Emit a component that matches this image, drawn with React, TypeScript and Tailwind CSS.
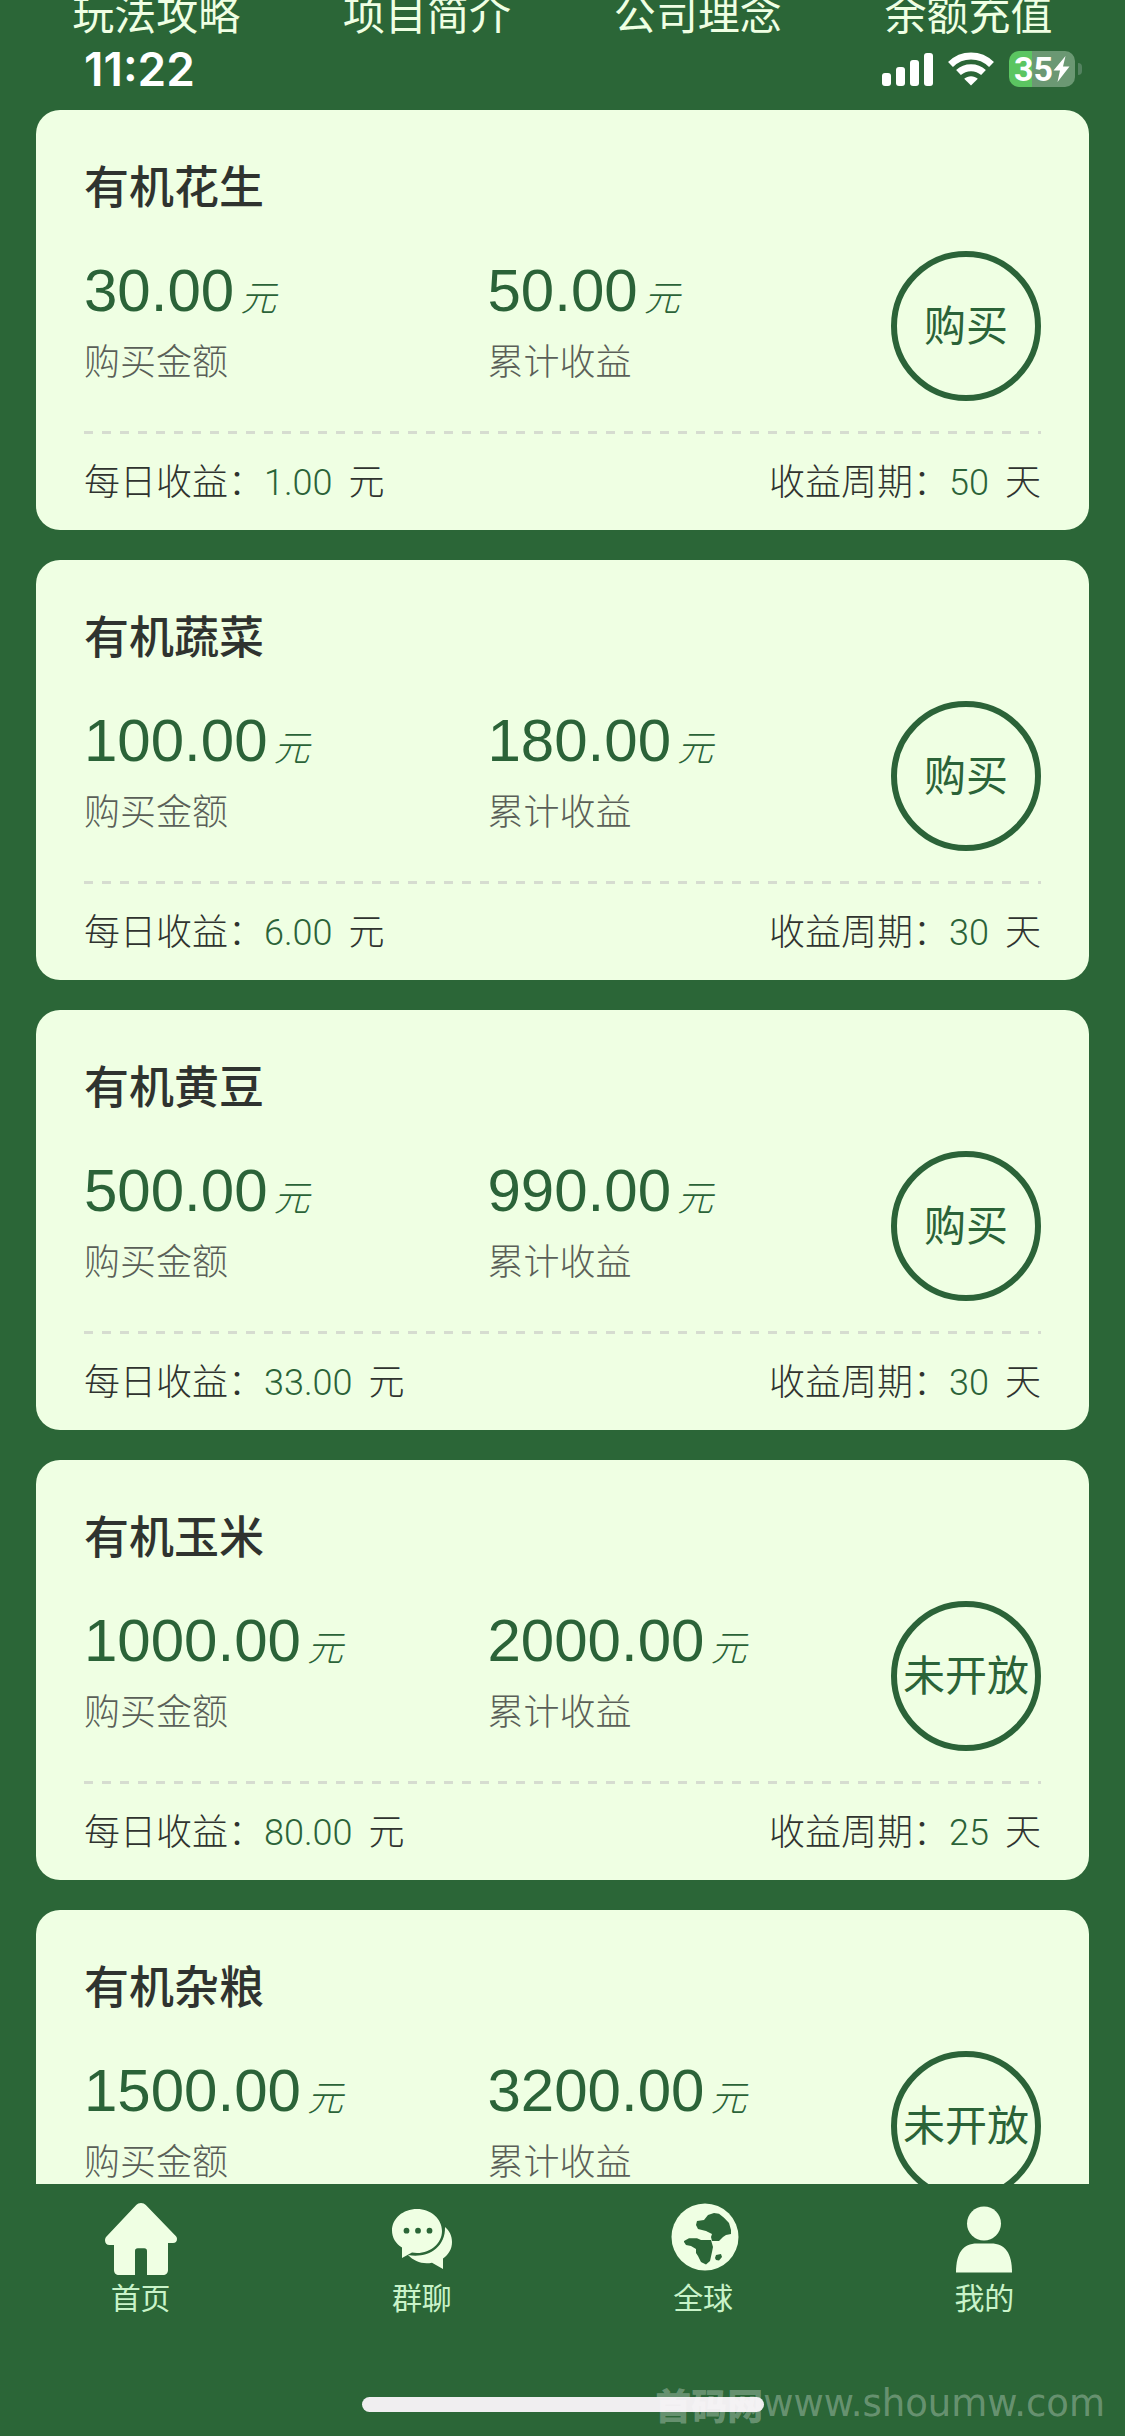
import type { ReactNode } from "react";

interface Product {
  name: string;
  price: string;
  total: string;
  daily: string;
  days: number;
  open: boolean;
}

const shortcuts = ["玩法攻略", "项目简介", "公司理念", "余额充值"];

const products: Product[] = [
  { name: "有机花生", price: "30.00", total: "50.00", daily: "1.00", days: 50, open: true },
  { name: "有机蔬菜", price: "100.00", total: "180.00", daily: "6.00", days: 30, open: true },
  { name: "有机黄豆", price: "500.00", total: "990.00", daily: "33.00", days: 30, open: true },
  { name: "有机玉米", price: "1000.00", total: "2000.00", daily: "80.00", days: 25, open: false },
  { name: "有机杂粮", price: "1500.00", total: "3200.00", daily: "125.00", days: 25, open: false },
];

function StatusBar() {
  return (
    <div className="flex h-[58px] items-center justify-between pl-[84px] pr-[43px] text-white">
      <span className="font-['Inter',sans-serif] text-[46px] font-semibold leading-none">11:22</span>
      <div className="flex items-center gap-[15px]">
        <svg width="51" height="33" viewBox="0 0 51 33" fill="currentColor" aria-hidden="true">
          <rect x="0" y="20" width="9" height="13" rx="3" />
          <rect x="14" y="14" width="9" height="19" rx="3" />
          <rect x="28" y="7" width="9" height="26" rx="3" />
          <rect x="42" y="0" width="9" height="33" rx="3" />
        </svg>
        <svg width="46" height="34" viewBox="0 0 46 34" aria-hidden="true">
          <g fill="none" stroke="currentColor" strokeWidth="7">
            <path d="M2.5 12.5C14 1.200 32 1.200 43.500 12.500" />
            <path d="M10.500 20.500C17.500 14 28.500 14 35.500 20.500" />
          </g>
          <path d="M23 33.500l-6.800-6.700c3.700-3.400 9.900-3.400 13.600 0z" fill="currentColor" />
        </svg>
        <div className="flex items-center gap-[3px]">
          <div className="flex h-9 w-[66px] items-center justify-center rounded-[10px] bg-[linear-gradient(90deg,#5bc561_35%,#6b9873_35%)]">
            <span className="font-['Roboto',sans-serif] text-[34px] font-bold leading-none">35</span>
            <svg width="17" height="26" viewBox="0 0 17 26" fill="currentColor" aria-hidden="true">
              <path d="M12.500 0L0.500 14.500h6.500L4.500 26L16.500 10.500H10z" />
            </svg>
          </div>
          <div className="h-3 w-1 rounded-r-full bg-[#548260]" />
        </div>
      </div>
    </div>
  );
}

function Amount({ value, label }: { value: string; label: string }) {
  return (
    <div className="flex-1 pt-[10px]">
      <div className="flex h-[60px] items-baseline gap-[6px] text-[#2b6338]">
        <span className="text-[60px] leading-[60px]">{value}</span>
        <i className="text-[36px] font-light leading-none">元</i>
      </div>
      <div className="mt-[18px] text-[36px] font-light leading-[48px] text-[#5a5f58]">{label}</div>
    </div>
  );
}

function ProductCard({ product }: { product: Product }) {
  return (
    <article className="rounded-[24px] bg-[#efffe3] px-12 pb-[29px] pt-[55px]">
      <h2 className="text-[45px] font-medium leading-[48px] text-[#2f332f]">{product.name}</h2>
      <div className="mt-[38px] flex">
        <Amount value={product.price} label="购买金额" />
        <Amount value={product.total} label="累计收益" />
        <button
          type="button"
          disabled={!product.open}
          className="h-[150px] w-[150px] shrink-0 whitespace-nowrap rounded-full border-[6px] border-[#2b6338] pt-[2px] text-[42px] leading-none text-[#2b6338]"
        >
          <span className="-mx-3">{product.open ? "购买" : "未开放"}</span>
        </button>
      </div>
      <div className="mt-[30px] h-[3px] bg-[repeating-linear-gradient(90deg,#d6dcd0_0_9px,transparent_9px_18px)]" />
      <div className="mt-[31px] flex justify-between text-[36px] font-light leading-[36px] text-[#2f332f]">
        <p>
          每日收益：<span className="font-['Roboto',sans-serif] text-[#2b6338]">{product.daily}</span>
          <span className="ml-4">元</span>
        </p>
        <p>
          收益周期：<span className="font-['Roboto',sans-serif] text-[#2b6338]">{product.days}</span>
          <span className="ml-4">天</span>
        </p>
      </div>
    </article>
  );
}

function TabItem({ label, children }: { label: string; children: ReactNode }) {
  return (
    <a href="#" className="flex flex-col items-center gap-[9px] text-[#efffe3]">
      <svg width="72" height="72" viewBox="0 0 72 72" fill="currentColor" aria-hidden="true">
        {children}
      </svg>
      <span className="text-[30px] leading-[30px] text-[#c9f3c9]">{label}</span>
    </a>
  );
}

function TabBar() {
  return (
    <nav className="relative flex h-[252px] shrink-0 flex-col items-center justify-between bg-[#2b6637] pb-6 pt-[19px]">
      <div className="grid w-full grid-cols-4">
        <TabItem label="首页">
          <path d="M36 0c-2 0-3.500.800-4.800 2.100L1.500 33.500C.500 34.600 0 35.800 0 37.200 0 40 1.800 42 4.500 42H9v25c0 3 2 5 5 5h16V48c0-1.700 1-2.700 2.700-2.700h6.600c1.700 0 2.700 1 2.700 2.700v24h16c3 0 5-2 5-5V40h5c2.500 0 4-1.500 4-4 0-1-.500-2.200-1.500-3.200L40.800 2.100C39.500.800 38 0 36 0z" />
        </TabItem>
        <TabItem label="群聊">
          <path
            fillRule="evenodd"
            d="M31 6C17 6 6 15.500 6 27.500c0 7 3.700 13 10 17V55l10-5.500c1.600.300 3.300.500 5 .500 14 0 25-9.800 25-22S45 6 31 6zM20.500 24.800a2.900 2.900 0 110 5.800 2.900 2.900 0 010-5.800zm11.500 0a2.900 2.900 0 110 5.800 2.900 2.900 0 010-5.800zm11.500 0a2.900 2.900 0 110 5.800 2.900 2.900 0 010-5.800z"
          />
          <path d="M59 24c4.400 3.500 7 8.800 7 15 0 6.800-3.300 12.500-9 16.500V66l-11-6.300c-9.500 1.800-18-1.300-24-7.700 18 3.500 37.500-6 37-28z" />
        </TabItem>
        <TabItem label="全球">
          <circle cx="38" cy="34" r="33.500" />
          <g fill="#2b6637">
            <path d="M47 10l5 .800 5 4 5 5.200 2 7v4l-5 1-3 2-4 4h-7l-1-4 1-3-6-3-8-2-2-4 1-4 7-1 4-5z" />
            <path d="M17 38l5-2.800h8l4 1.800h10l2 7-1 5-2 9-4 3.500-5-2.500-3-6-2-3v-4l-5-3-5-1-2-3z" />
            <path d="M49 52l5-1 1 3-3 3.500-3-.500-1-2z" />
          </g>
        </TabItem>
        <TabItem label="我的">
          <circle cx="36" cy="20.500" r="17" />
          <path d="M8 69.500C8 50 15 40.500 29 40.500h14C57 40.500 64 50 64 69.500z" />
        </TabItem>
      </div>
      <div className="h-[15px] w-[402px] rounded-full bg-[#f0eef0]" />
      <div className="absolute bottom-[14px] right-5 flex items-center whitespace-nowrap leading-[36px] text-white/30">
        <span className="font-['Noto_Sans_CJK_SC',sans-serif] text-[36px] font-black">首码网</span>
        <span className="font-['DejaVu_Sans',sans-serif] text-[37px]">www.shoumw.com</span>
      </div>
    </nav>
  );
}

export default function App() {
  return (
    <div className="flex h-screen flex-col overflow-hidden bg-[#2b6637] font-['Liberation_Sans','Noto_Sans_CJK_SC',sans-serif]">
      <main className="min-h-0 flex-1 overflow-hidden">
        <div className="-mt-2 grid grid-cols-4 px-[21px] text-center text-[42px] leading-[48px] text-[#efffe3]">
          {shortcuts.map((item) => (
            <a key={item} href="#">
              {item}
            </a>
          ))}
        </div>
        <StatusBar />
        <div className="mt-3 flex flex-col gap-[30px] px-9">
          {products.map((product) => (
            <ProductCard key={product.name} product={product} />
          ))}
        </div>
      </main>
      <TabBar />
    </div>
  );
}
